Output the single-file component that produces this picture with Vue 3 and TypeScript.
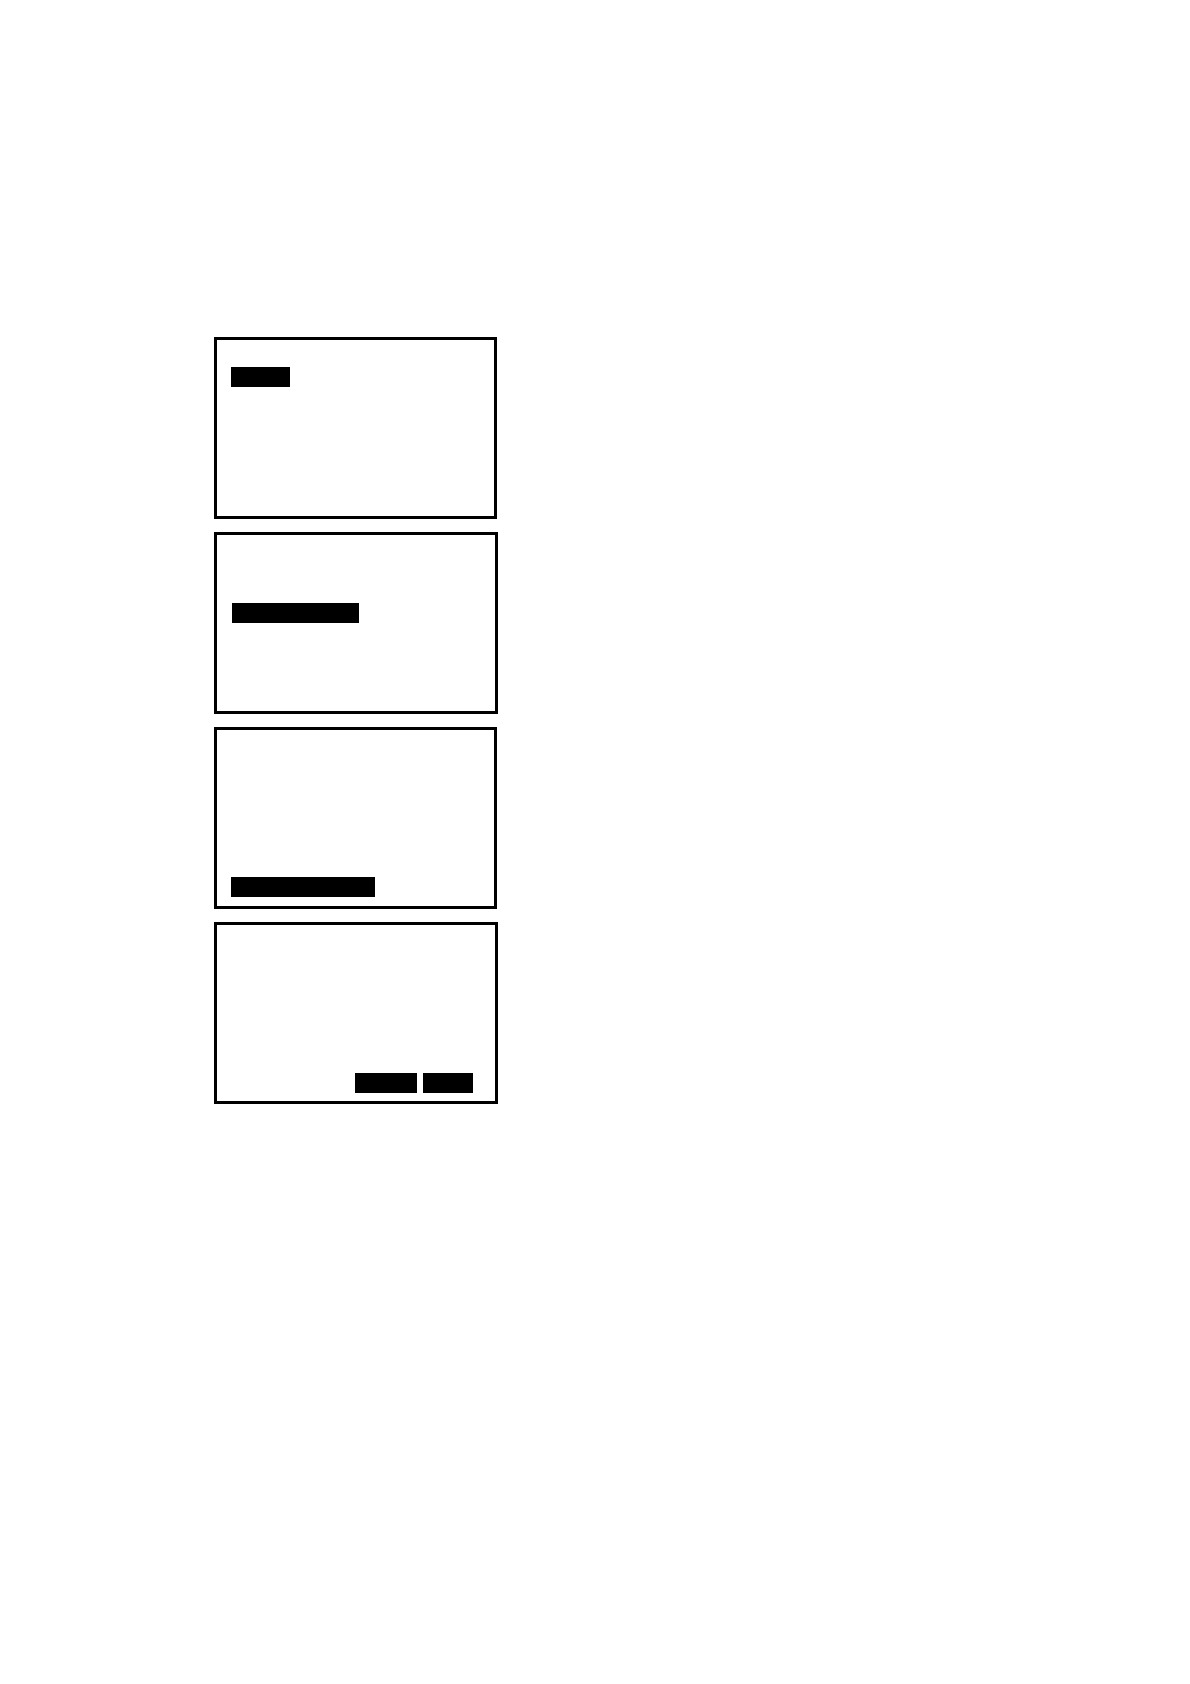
<script setup lang="ts">
interface Screen {
  id: string
  bars: number[]
}

// Each screen lists the widths of its highlighted fields.
const screens: Screen[] = [
  { id: 'top', bars: [59] },
  { id: 'middle', bars: [127] },
  { id: 'bottom', bars: [144] },
  { id: 'actions', bars: [62, 50] },
]
</script>

<template>
  <main class="page">
    <section v-for="screen in screens" :key="screen.id" class="screen" :class="screen.id">
      <div
        v-for="(width, index) in screen.bars"
        :key="index"
        class="bar"
        :style="{ width: width + 'px' }"
      ></div>
    </section>
  </main>
</template>

<style>
body {
  margin: 0;
  background: #fff;
}
</style>

<style scoped>
.page {
  display: flex;
  flex-direction: column;
  gap: 13px;
  padding: 337px 24px 337px 214px;
}

.screen {
  box-sizing: border-box;
  display: flex;
  align-items: flex-start;
  gap: 6px;
  width: 100%;
  max-width: 283px;
  min-height: 182px;
  padding: 27px 14px;
  border: 3px solid #000;
}

.middle,
.actions {
  max-width: 284px;
}

.middle {
  padding: 68px 15px;
}

.bottom {
  align-items: flex-end;
  padding-bottom: 9px;
}

.actions {
  align-items: flex-end;
  justify-content: flex-end;
  padding: 27px 22px 8px;
}

.bar {
  height: 20px;
  background: #000;
}
</style>
